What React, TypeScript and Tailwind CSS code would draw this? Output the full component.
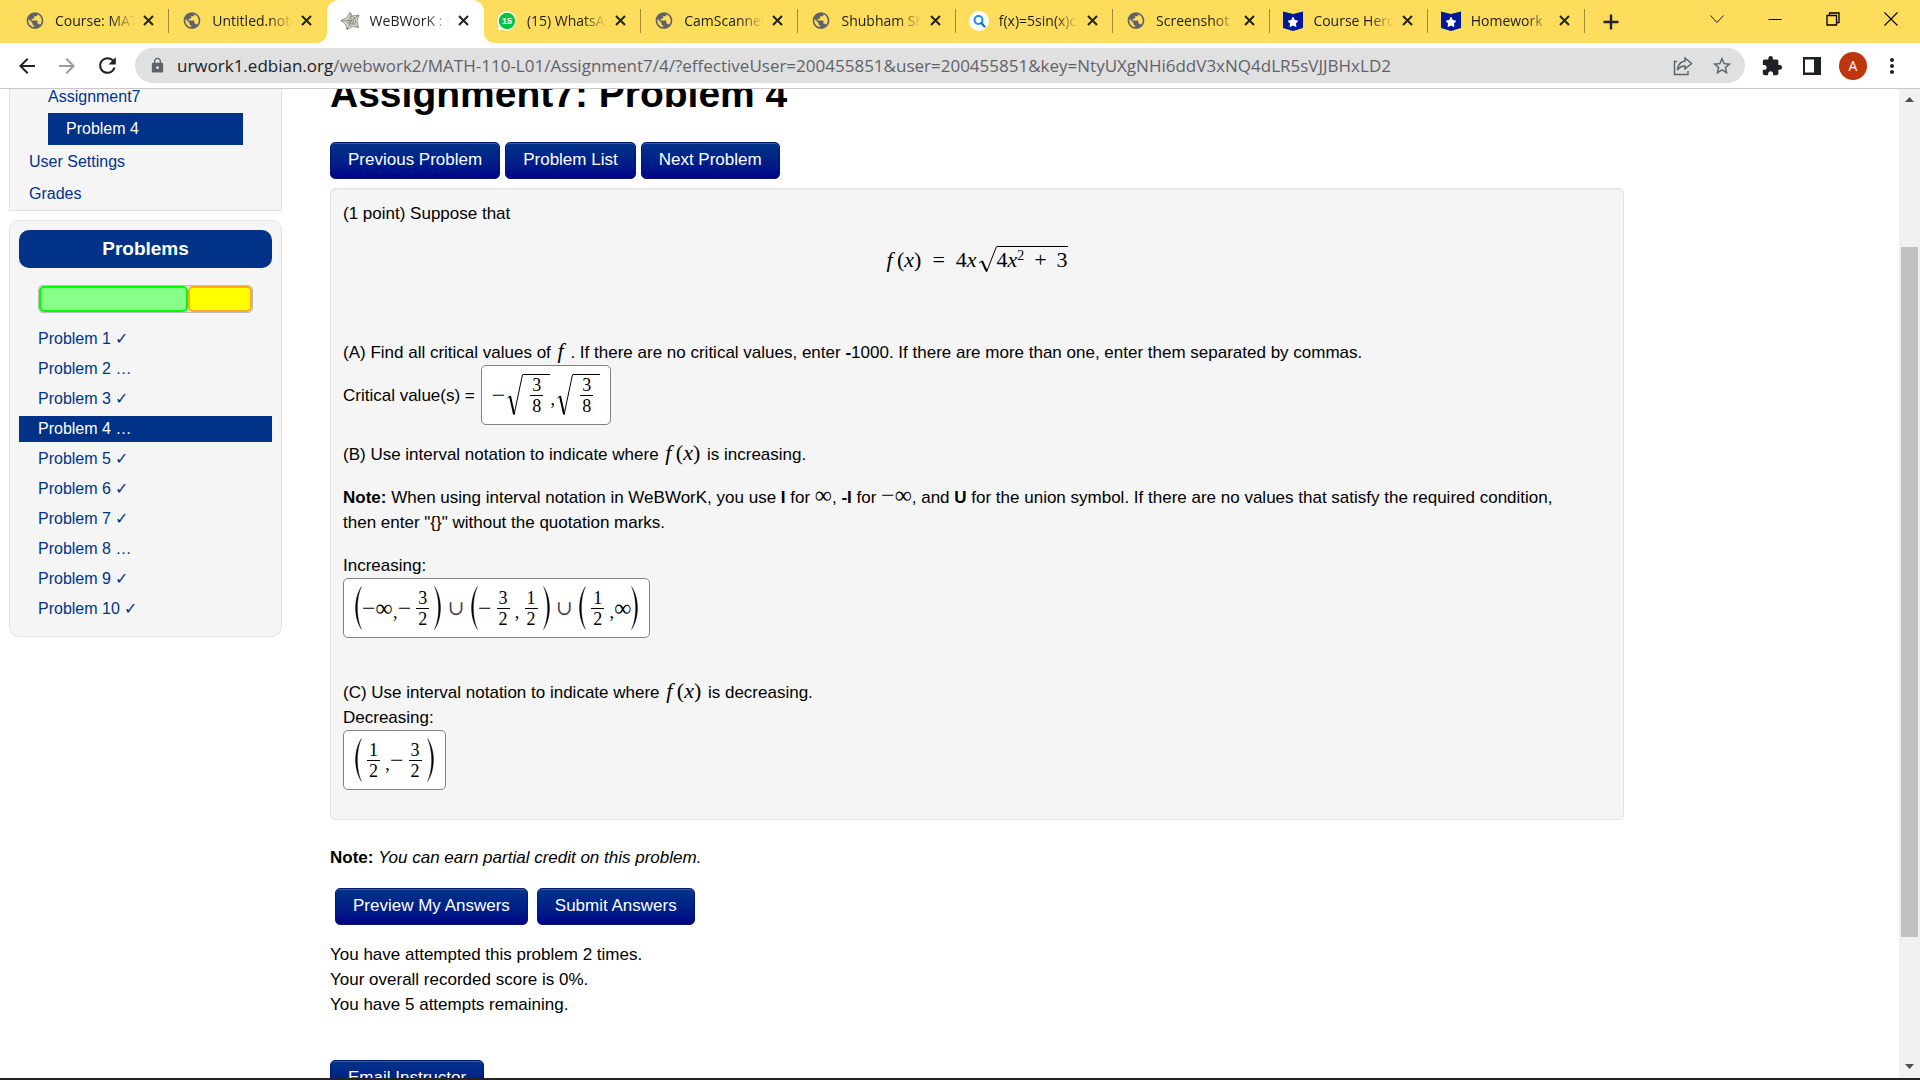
import React from "react";
import { FaStar } from "react-icons/fa";
import {
  MdArrowBack,
  MdArrowForward,
  MdExtension,
  MdLock,
  MdMoreVert,
  MdPublic,
  MdRefresh,
  MdStarBorder,
} from "react-icons/md";

type TabProps = {
  kind: string;
  title: string;
  active?: boolean;
  divider?: boolean;
};

const tabs: TabProps[] = [
  { kind: "globe", title: "Course: MATH", divider: true },
  { kind: "globe", title: "Untitled.notebook" },
  { kind: "web", title: "WeBWorK : M", active: true },
  { kind: "whatsapp", title: "(15) WhatsApp", divider: true },
  { kind: "globe", title: "CamScanner", divider: true },
  { kind: "globe", title: "Shubham Sh", divider: true },
  { kind: "search", title: "f(x)=5sin(x)co", divider: true },
  { kind: "globe", title: "Screenshot", divider: true },
  { kind: "hero", title: "Course Hero", divider: true },
  { kind: "hero", title: "Homework", divider: true },
];

const problems = [
  { id: 1, mark: "✓" },
  { id: 2, mark: "…" },
  { id: 3, mark: "✓" },
  { id: 4, mark: "…" },
  { id: 5, mark: "✓" },
  { id: 6, mark: "✓" },
  { id: 7, mark: "✓" },
  { id: 8, mark: "…" },
  { id: 9, mark: "✓" },
  { id: 10, mark: "✓" },
];

function Favicon({ kind }: { kind: string }) {
  if (kind === "web") {
    return (
      <svg width="20" height="20" viewBox="0 0 20 20" fill="#e0ded4" stroke="#8c8a80" strokeWidth="0.9">
        <path d="M10 1.5 L12.5 5 L19 4 L17 10 L18.5 16.500 L12.5 15.500 L7 18.500 L5.500 13 L0.800 9.500 L6.500 7 Z" />
        <path d="M10.500 5 L15 7 L15.500 12.500 L10 14.500 L6.500 10.500 Z" fill="none" />
        <path d="M11 7.500 L13.500 9 L13 12 L10 12.500 L8.800 10 Z" fill="none" />
        <path d="M10 1.500 L11 10 L19 4 M0.800 9.500 L11 10 L18.500 16.500 M11 10 L7 18.500" fill="none" />
      </svg>
    );
  }
  if (kind === "whatsapp") {
    return (
      <svg width="20" height="20" viewBox="0 0 20 20">
        <path d="M10 0.5 A9.5 9.5 0 1 1 5 18.2 L0.5 19.5 L1.8 15 A9.5 9.5 0 0 1 10 0.5 Z" fill="#fff" />
        <circle cx="10" cy="10" r="8.2" fill="#08c33f" />
        <text x="10" y="13" fontSize="9" fontWeight="700" fontFamily="Liberation Sans, sans-serif" fill="#fff" textAnchor="middle">
          15
        </text>
      </svg>
    );
  }
  if (kind === "search") {
    return (
      <svg width="20" height="20" viewBox="0 0 20 20">
        <circle cx="10" cy="10" r="10" fill="#fff" />
        <circle cx="9.5" cy="9" r="4" fill="none" stroke="#1a8cf0" strokeWidth="2" />
        <path d="M12.3 12 L15.5 15.5" stroke="#1565d8" strokeWidth="2.2" strokeLinecap="round" />
      </svg>
    );
  }
  if (kind === "hero") {
    return (
      <svg width="20" height="20" viewBox="0 0 20 20">
        <path d="M0 0.5 L10 3 L20 0.5 V17 L10 20 L0 17 Z" fill="#03179b" />
        <FaStar x="4.5" y="5.5" size={11} color="#fff" />
      </svg>
    );
  }
  return <MdPublic size={21} className="text-[#5f6368]" />;
}

function Tab({ kind, title, active, divider }: TabProps) {
  return (
    <div
      className={
        active
          ? "relative flex h-full min-w-0 flex-1 items-center rounded-t-xl bg-white pr-3 pb-[2px] pl-[13px]"
          : "relative flex h-full min-w-0 flex-1 items-center pr-3 pb-[2px] pl-[13px]"
      }
    >
      {active && (
        <>
          <svg width="10" height="10" viewBox="0 0 10 10" fill="#fff" className="absolute bottom-0 -left-[10px]">
            <path d="M10 0 V10 H0 A10 10 0 0 0 10 0 Z" />
          </svg>
          <svg width="10" height="10" viewBox="0 0 10 10" fill="#fff" className="absolute -right-[10px] bottom-0">
            <path d="M0 0 V10 H10 A10 10 0 0 1 0 0 Z" />
          </svg>
        </>
      )}
      <span className="flex w-5 shrink-0 justify-center">
        <Favicon kind={kind} />
      </span>
      <span className="ml-[10px] min-w-0 flex-1 overflow-hidden mask-r-from-70% whitespace-nowrap">{title}</span>
      <button aria-label="Close tab" className="ml-2 shrink-0 pr-[3px]">
        <svg width="11" height="11" viewBox="0 0 11 11" stroke="#202124" strokeWidth="2">
          <path d="M1 1 L10 10 M10 1 L1 10" />
        </svg>
      </button>
      {divider && <span className="absolute right-0 h-6 w-px bg-[#a08a38]" />}
    </div>
  );
}

function BrowserBar() {
  return (
    <header className="shrink-0 font-['Open_Sans','Noto_Sans',sans-serif] text-[#202124]">
      <div className="flex h-[43px] items-center bg-[#ffdd5c] pl-3 text-sm">
        <div className="flex h-full w-[1573px] min-w-0 items-center">
          {tabs.map((tab, i) => (
            <Tab key={i} {...tab} />
          ))}
        </div>
        <button aria-label="New tab" className="ml-[18px]">
          <svg width="16" height="16" viewBox="0 0 16 16" stroke="#202124" strokeWidth="2.4">
            <path d="M8 0.5 V15.5 M0.5 8 H15.5" />
          </svg>
        </button>
        <div className="ml-auto flex items-center gap-11 pr-[22px] pb-[6px]">
          <button aria-label="Search tabs">
            <svg width="14" height="14" viewBox="0 0 14 14" fill="none" stroke="#202124">
              <path d="M0.5 3.5 L7 10.5 L13.5 3.5" />
            </svg>
          </button>
          <button aria-label="Minimize">
            <svg width="14" height="14" viewBox="0 0 14 14" stroke="#000">
              <path d="M0.5 7.5 H13.5" />
            </svg>
          </button>
          <button aria-label="Restore">
            <svg width="14" height="14" viewBox="0 0 14 14" fill="none" stroke="#000" strokeWidth="1.3">
              <path d="M1 3.5 H10.5 V13 H1 Z M3.5 3.5 V1 H13 V10.5 H10.5" />
            </svg>
          </button>
          <button aria-label="Close">
            <svg width="14" height="14" viewBox="0 0 14 14" stroke="#000" strokeWidth="1.1">
              <path d="M0.5 0.5 L13.5 13.5 M13.5 0.5 L0.5 13.5" />
            </svg>
          </button>
        </div>
      </div>
      <div className="flex h-[46px] items-center border-b border-[#c8c8c8] bg-white pl-[15px]">
        <button aria-label="Back">
          <MdArrowBack size={24} />
        </button>
        <button aria-label="Forward" className="ml-4 text-[#9a9b9d]">
          <MdArrowForward size={24} />
        </button>
        <button aria-label="Reload" className="ml-4">
          <MdRefresh size={25} />
        </button>
        <div className="ml-[15px] flex h-[35px] min-w-0 flex-1 items-center rounded-full bg-[#e0e0e0] pr-3 pl-[14px] text-[#5f6368]">
          <MdLock size={17} className="shrink-0" />
          <p className="ml-[11px] min-w-0 flex-1 truncate text-[17px]">
            <span className="text-[#202124]">urwork1.edbian.org</span>
            /webwork2/MATH-110-L01/Assignment7/4/?effectiveUser=200455851&amp;user=200455851&amp;key=NtyUXgNHi6ddV3xNQ4dLR5sVJJBHxLD2
          </p>
          <button aria-label="Share this page">
            <svg width="20" height="20" viewBox="0 0 20 20" fill="none" stroke="#5f6368" strokeWidth="1.5">
              <path d="M4 5.5 H1.5 V18.5 H15 V15" />
              <path d="M12 2 L18.5 7.5 L12 13 V10 C8.500 10 6.500 11 4.500 14 C5 9 7.500 5.500 12 5 Z" />
            </svg>
          </button>
          <button aria-label="Bookmark this page" className="ml-[18px]">
            <MdStarBorder size={22} />
          </button>
        </div>
        <button aria-label="Extensions" className="ml-4">
          <MdExtension size={22} />
        </button>
        <button aria-label="Side panel" className="ml-5">
          <svg width="18" height="18" viewBox="0 0 18 18">
            <path d="M0 0 H18 V18 H0 Z M2 2.500 V15.500 H11 V2.500 Z" fill="#202124" fillRule="evenodd" />
          </svg>
        </button>
        <button
          aria-label="Profile"
          className="ml-[18px] flex size-7 items-center justify-center rounded-full bg-[#bf360c] text-sm text-white"
        >
          A
        </button>
        <button aria-label="Menu" className="mr-4 ml-[13px]">
          <MdMoreVert size={24} />
        </button>
      </div>
    </header>
  );
}

function Sidebar() {
  return (
    <aside className="text-base text-[#003388]">
      <nav className="border border-t-0 border-[#e3e3e3] bg-[#f5f5f5]">
        <div className="px-[38px] pb-px">
          <a href="#assignment7" className="-mt-1 block pb-[4px] leading-6">
            Assignment7
          </a>
          <a href="#problem4" className="block bg-[#003388] pl-[18px] leading-8 text-white">
            Problem 4
          </a>
        </div>
        <a href="#settings" className="block pl-[19px] leading-8">
          User Settings
        </a>
        <a href="#grades" className="block pl-[19px] leading-8">
          Grades
        </a>
      </nav>
      <section className="mt-[9px] rounded-[10px] border border-[#e3e3e3] bg-[#f5f5f5] px-[9px] pt-[9px] pb-[14px]">
        <h2 className="rounded-[10px] bg-[#003388] text-center text-[19px] leading-[38px] font-bold text-white">Problems</h2>
        <div className="mx-[19px] mt-[17px] mb-[13px] flex h-7 rounded-[5px] border border-[#bbb] bg-[#e3e3e3]">
          <div className="w-[70%] rounded-[5px] border-2 border-[#00ff00] bg-[#88ff88]" />
          <div className="flex-1 rounded-[5px] border-2 border-[#ffaa22] bg-[#ffff00]" />
        </div>
        <ul className="flex flex-col gap-1">
          {problems.map((p) => (
            <li key={p.id}>
              <a
                href={"#problem" + p.id}
                className={p.id === 4 ? "block bg-[#003388] pl-[19px] leading-[26px] text-white" : "block pl-[19px] leading-[26px]"}
              >
                Problem {p.id} {p.mark}
              </a>
            </li>
          ))}
        </ul>
      </section>
    </aside>
  );
}

function BlueButton({ children }: { children: React.ReactNode }) {
  return (
    <button className="h-[37px] rounded-[5px] border border-[#00186e] bg-linear-to-b from-[#003388] to-[#000088] px-[17px] pb-[2px] text-white shadow-[inset_0_1px_0_rgba(255,255,255,0.2)]">
      {children}
    </button>
  );
}

function Fx() {
  return (
    <span className="mx-[2px] font-['Liberation_Serif',serif] text-[22px] leading-none">
      <i>f</i>&thinsp;(<i>x</i>)
    </span>
  );
}

function Frac({ top, bottom }: { top: string; bottom: string }) {
  return (
    <span className="mx-[5px] flex w-[13px] flex-col items-center text-lg leading-5">
      <span>{top}</span>
      <span className="h-px w-full bg-black" />
      <span>{bottom}</span>
    </span>
  );
}

function Root({ children }: { children: React.ReactNode }) {
  return (
    <span className="ml-[2px] flex items-center">
      <svg width="16" height="42" viewBox="0 0 16 42" fill="none" stroke="#000">
        <path d="M0.500 24 L3 22" strokeWidth="1" />
        <path d="M3 22 L7 40" strokeWidth="2" />
        <path d="M7 41 L15.500 0.500" strokeWidth="1" />
      </svg>
      <span className="flex h-[42px] items-center border-t border-black px-[2px]">{children}</span>
    </span>
  );
}

function Paren({ close }: { close?: boolean }) {
  return (
    <svg width="8" height="44" viewBox="0 0 8 44" fill="#000" className="shrink-0">
      {close ? (
        <path d="M0.500 0.500 C8.500 12 8.500 32 0.500 43.500 C6 32 6 12 0.500 0.500 Z" stroke="#000" strokeWidth="0.3" />
      ) : (
        <path d="M7.500 0.500 C-0.500 12 -0.500 32 7.500 43.500 C2 32 2 12 7.500 0.500 Z" stroke="#000" strokeWidth="0.3" />
      )}
    </svg>
  );
}

function Sym({ children }: { children: React.ReactNode }) {
  return <span className="text-2xl leading-none">{children}</span>;
}

function Comma() {
  return <span className="w-[5px] pt-2 text-center text-lg leading-none">,</span>;
}

function Union() {
  return <span className="mx-[6px] font-['DejaVu_Math_TeX_Gyre','DejaVu_Serif',serif] text-xl leading-none text-[#444]">∪</span>;
}

function Answer({ labelledBy, children }: { labelledBy: string; children: React.ReactNode }) {
  return (
    <span
      role="textbox"
      tabIndex={0}
      aria-labelledby={labelledBy}
      className="inline-flex h-[60px] items-center rounded-[5px] border border-[#808080] bg-white px-[10px] font-['Liberation_Serif',serif]"
    >
      {children}
    </span>
  );
}

function ProblemPanel() {
  return (
    <section className="mt-[9px] rounded-[5px] border border-[#e3e3e3] bg-[#f5f5f5] px-3 pt-3 pb-[29px] shadow-[inset_0_1px_1px_rgba(0,0,0,0.05)]">
      <p>(1 point) Suppose that</p>
      <div className="mt-[19px] flex h-7 items-center justify-center font-['Liberation_Serif',serif] text-[22px] leading-[27px]">
        <span>
          <i>f</i>&thinsp;(<i>x</i>) &nbsp;=&nbsp; 4<i>x</i>
        </span>
        <svg width="20" height="27" viewBox="0 0 20 27" fill="none" stroke="#000">
          <path d="M2 17 L5 15" />
          <path d="M5 15 L9.500 25" strokeWidth="2" />
          <path d="M9.500 26 L19.500 0.500" />
        </svg>
        <span className="h-[27px] border-t border-black leading-[25px]">
          4<i>x</i>
          <sup className="text-sm">2</sup>&thinsp; + &thinsp;3
        </span>
      </div>
      <p className="mt-[67px]">
        (A) Find all critical values of <i className="mx-[2px] font-['Liberation_Serif',serif] text-[22px] leading-none">f</i> . If there are
        no critical values, enter <b>-</b>1000. If there are more than one, enter them separated by commas.
      </p>
      <div className="flex items-center gap-[6px]">
        <span id="critical">Critical value(s) =</span>
        <Answer labelledBy="critical">
          <Sym>−</Sym>
          <Root>
            <Frac top="3" bottom="8" />
          </Root>
          <Comma />
          <Root>
            <Frac top="3" bottom="8" />
          </Root>
        </Answer>
      </div>
      <p className="mt-[17px]">
        (B) Use interval notation to indicate where <Fx /> is increasing.
      </p>
      <p className="mt-4">
        <b>Note:</b> When using interval notation in WeBWorK, you use <b>I</b> for{" "}
        <span className="font-['Liberation_Serif',serif] text-2xl leading-none">∞</span>, <b>-I</b> for{" "}
        <span className="font-['Liberation_Serif',serif] text-2xl leading-none">−∞</span>, and <b>U</b> for the union symbol. If
        there are no values that satisfy the required condition,
        <br />
        then enter "{"{}"}" without the quotation marks.
      </p>
      <p id="increasing" className="mt-[18px]">
        Increasing:
      </p>
      <div className="flex">
        <Answer labelledBy="increasing">
          <Paren />
          <Sym>−∞</Sym>
          <Comma />
          <Sym>−</Sym>
          <Frac top="3" bottom="2" />
          <Paren close />
          <Union />
          <Paren />
          <Sym>−</Sym>
          <Frac top="3" bottom="2" />
          <Comma />
          <Frac top="1" bottom="2" />
          <Paren close />
          <Union />
          <Paren />
          <Frac top="1" bottom="2" />
          <Comma />
          <Sym>∞</Sym>
          <Paren close />
        </Answer>
      </div>
      <p className="mt-[42px]">
        (C) Use interval notation to indicate where <Fx /> is decreasing.
      </p>
      <p id="decreasing">Decreasing:</p>
      <div className="flex">
        <Answer labelledBy="decreasing">
          <Paren />
          <Frac top="1" bottom="2" />
          <Comma />
          <Sym>−</Sym>
          <Frac top="3" bottom="2" />
          <Paren close />
        </Answer>
      </div>
    </section>
  );
}

function Scrollbar() {
  return (
    <div className="flex w-[21px] shrink-0 flex-col items-center bg-[#f1f1f1] py-2">
      <svg width="9" height="6" viewBox="0 0 9 6" fill="#505050">
        <path d="M0 5 L4.500 0 L9 5 Z" />
      </svg>
      <div className="flex w-[17px] flex-1 flex-col pt-3 pb-1">
        <div className="h-[14%]" />
        <div className="h-[73%] bg-[#c1c1c1]" />
      </div>
      <svg width="9" height="6" viewBox="0 0 9 6" fill="#505050">
        <path d="M0 0 L4.500 5 L9 0 Z" />
      </svg>
    </div>
  );
}

function App() {
  return (
    <div className="flex h-screen flex-col overflow-hidden border-b-2 border-[#222] bg-white">
      <BrowserBar />
      <div className="flex min-h-0 flex-1">
        <div className="grid min-w-0 flex-1 grid-cols-[273px_minmax(0,1fr)_275px] items-start overflow-hidden pl-[9px] font-['Liberation_Sans',Arial,sans-serif] text-[17px] leading-[25px] text-black">
          <Sidebar />
          <main className="pl-12">
            <h1 className="-mt-[20px] text-[39px] leading-[50px] font-bold">Assignment7: Problem 4</h1>
            <div className="mt-[23px] flex gap-[5px]">
              <BlueButton>Previous Problem</BlueButton>
              <BlueButton>Problem List</BlueButton>
              <BlueButton>Next Problem</BlueButton>
            </div>
            <ProblemPanel />
            <p className="mt-[25px]">
              <b>Note:</b> <i>You can earn partial credit on this problem.</i>
            </p>
            <div className="mt-[18px] flex gap-[9px] pl-[5px]">
              <BlueButton>Preview My Answers</BlueButton>
              <BlueButton>Submit Answers</BlueButton>
            </div>
            <p className="mt-[17px]">
              You have attempted this problem 2 times.
              <br />
              Your overall recorded score is 0%.
              <br />
              You have 5 attempts remaining.
            </p>
            <div className="mt-[43px]">
              <BlueButton>Email Instructor</BlueButton>
            </div>
          </main>
        </div>
        <Scrollbar />
      </div>
    </div>
  );
}

export default App;
